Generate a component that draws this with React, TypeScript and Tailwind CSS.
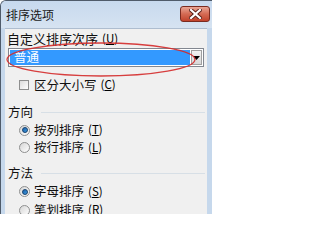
import React from "react";

const cjk = { fontFamily: '"Noto Sans CJK SC", "Microsoft YaHei", sans-serif' };

function Key({ k }: { k: string }) {
  return (
    <span className="ml-[4px] text-[11.5px]" style={cjk}>
      (<span className="underline">{k}</span>)
    </span>
  );
}

function Radio({ checked }: { checked: boolean }) {
  return (
    <span className="w-[11px] h-[11px] rounded-full border border-[#8e8f8f] bg-gradient-to-br from-[#d6d6d6] to-[#ffffff] flex items-center justify-center shrink-0">
      {checked ? (
        <span className="w-[6px] h-[6px] rounded-full bg-gradient-to-br from-[#1b5fa8] to-[#3d9be0] border border-[#13406e]" />
      ) : null}
    </span>
  );
}

function RadioRow({ label, k, checked, h }: { label: string; k: string; checked: boolean; h: string }) {
  return (
    <div className={`flex items-center pl-[14px] ${h}`}>
      <Radio checked={checked} />
      <span className="ml-[4px] text-[12.5px] text-[#111]" style={cjk}>
        {label}
      </span>
      <Key k={k} />
    </div>
  );
}

function Header({ label, cls }: { label: string; cls: string }) {
  return (
    <div className={`flex items-center pl-[3px] pr-[2px] ${cls}`}>
      <span className="text-[12.5px] text-[#111]" style={cjk}>
        {label}
      </span>
      <span className="flex-1 ml-[8px] h-[1px] bg-[#d7dfe6]" />
    </div>
  );
}

export default function App() {
  return (
    <div className="relative w-[212px] h-[214px] overflow-hidden bg-[#c6d8ec] border-l border-t border-[#4f5b6a] rounded-tl-[6px] flex flex-col">
      {/* Title bar */}
      <div className="h-[27px] shrink-0 flex items-center bg-gradient-to-b from-[#c7d9ee] to-[#d6e3f1] pl-[5px] pr-[2px]">
        <span className="text-[12px] text-[#1a1a1a]" style={cjk}>
          排序选项
        </span>
        <div className="ml-auto w-[30px] h-[16px] rounded-[3px] border border-[#7a2b20] bg-gradient-to-b from-[#e8a595] via-[#d46a53] to-[#c1422b] flex items-center justify-center mt-[-2px]">
          <svg width="13" height="10" viewBox="0 0 13 10">
            <path d="M2 1 L11 9 M11 1 L2 9" stroke="#5a2018" strokeWidth="4" strokeLinecap="square" />
            <path d="M2 1 L11 9 M11 1 L2 9" stroke="#ffffff" strokeWidth="2.2" strokeLinecap="square" />
          </svg>
        </div>
      </div>
      {/* Content */}
      <div className="flex-1 ml-[4px] mr-[5px] bg-[#f0f0f0] border-t border-[#aebdcf] flex flex-col">
        <div className="h-[19px] flex items-center pl-[2px]">
          <span className="text-[13px] text-[#111]" style={cjk}>
            自定义排序次序
          </span>
          <Key k="U" />
        </div>
        <div className="h-[19px] ml-[3px] mr-[3px] border border-[#828790] bg-white flex items-stretch p-[1px]">
          <div className="flex-1 bg-[#3399ff] flex items-center pl-[4px]">
            <span className="text-[12.5px] text-white leading-none" style={cjk}>
              普通
            </span>
          </div>
          <div className="w-[11px] ml-[1px] border border-[#a0a0a0] bg-gradient-to-b from-[#f2f2f2] to-[#d8d8d8] flex items-center justify-center">
            <svg width="7" height="4" viewBox="0 0 7 4">
              <path d="M0 0 L7 0 L3.5 4 Z" fill="#000" />
            </svg>
          </div>
        </div>
        <div className="mt-[9px] h-[18px] flex items-center pl-[14px]">
          <span className="w-[10px] h-[10px] border border-[#8e8f8f] bg-gradient-to-br from-[#dcdcdc] to-[#ffffff] shrink-0" />
          <span className="ml-[5px] text-[12.5px] text-[#111]" style={cjk}>
            区分大小写
          </span>
          <Key k="C" />
        </div>
        <Header label="方向" cls="mt-[9px] h-[18px]" />
        <RadioRow label="按列排序" k="T" checked h="h-[18px]" />
        <RadioRow label="按行排序" k="L" checked={false} h="h-[17px]" />
        <Header label="方法" cls="mt-[8px] h-[18px]" />
        <RadioRow label="字母排序" k="S" checked h="h-[19px]" />
        <RadioRow label="笔划排序" k="R" checked={false} h="h-[18px]" />
      </div>
      {/* Red annotation ellipse */}
      <svg className="absolute left-0 top-0 pointer-events-none" width="212" height="214" viewBox="0 0 212 214">
        <ellipse cx="100" cy="58.5" rx="94" ry="16.5" fill="none" stroke="#d42a2a" strokeWidth="1.3" opacity="0.9" />
      </svg>
    </div>
  );
}
